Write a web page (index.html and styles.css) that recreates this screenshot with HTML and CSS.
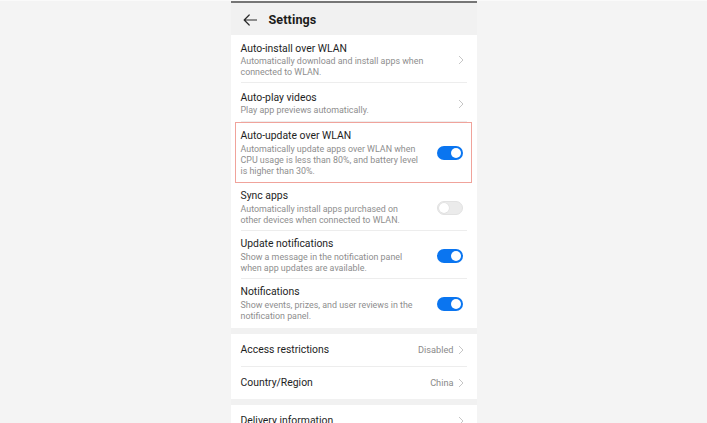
FILE: index.html
```html
<!DOCTYPE html>
<html lang="en">
<head>
<meta charset="utf-8">
<title>Settings</title>
<link rel="stylesheet" href="styles.css">
</head>
<body>
<div class="page">
  <div class="phone">
    <header class="header">
      <svg class="back" width="14" height="12" viewBox="0 0 14 12" aria-hidden="true">
        <path d="M13.5 6H1.2M6.2 1L1.2 6l5 5" fill="none" stroke="#2a2a2a" stroke-width="1.2" stroke-linecap="round" stroke-linejoin="round"/>
      </svg>
      <h1 class="title">Settings</h1>
    </header>

    <section class="card list">
      <div class="row row-first">
        <div class="text">
          <div class="name">Auto-install over WLAN</div>
          <div class="desc">Automatically download and install apps when<br>connected to WLAN.</div>
        </div>
        <svg class="chev" width="6" height="10" viewBox="0 0 6 10" aria-hidden="true"><path d="M1 1l4 4-4 4" fill="none" stroke="#c6c6c6" stroke-width="1"/></svg>
      </div>
      <div class="row row-second">
        <div class="text">
          <div class="name">Auto-play videos</div>
          <div class="desc">Play app previews automatically.</div>
        </div>
        <svg class="chev" width="6" height="10" viewBox="0 0 6 10" aria-hidden="true"><path d="M1 1l4 4-4 4" fill="none" stroke="#c6c6c6" stroke-width="1"/></svg>
      </div>
      <div class="row highlight">
        <div class="text">
          <div class="name">Auto-update over WLAN</div>
          <div class="desc">Automatically update apps over WLAN when<br>CPU usage is less than 80%, and battery level<br>is higher than 30%.</div>
        </div>
        <span class="switch on"><span class="knob"></span></span>
      </div>
      <div class="row">
        <div class="text">
          <div class="name">Sync apps</div>
          <div class="desc">Automatically install apps purchased on<br>other devices when connected to WLAN.</div>
        </div>
        <span class="switch off"><span class="knob"></span></span>
      </div>
      <div class="row">
        <div class="text">
          <div class="name">Update notifications</div>
          <div class="desc">Show a message in the notification panel<br>when app updates are available.</div>
        </div>
        <span class="switch on"><span class="knob"></span></span>
      </div>
      <div class="row row-last">
        <div class="text">
          <div class="name">Notifications</div>
          <div class="desc">Show events, prizes, and user reviews in the<br>notification panel.</div>
        </div>
        <span class="switch on"><span class="knob"></span></span>
      </div>
    </section>

    <section class="card list">
      <div class="row simple">
        <div class="name">Access restrictions</div>
        <div class="value">Disabled</div>
        <svg class="chev" width="6" height="10" viewBox="0 0 6 10" aria-hidden="true"><path d="M1 1l4 4-4 4" fill="none" stroke="#c6c6c6" stroke-width="1"/></svg>
      </div>
      <div class="row simple">
        <div class="name">Country/Region</div>
        <div class="value">China</div>
        <svg class="chev" width="6" height="10" viewBox="0 0 6 10" aria-hidden="true"><path d="M1 1l4 4-4 4" fill="none" stroke="#c6c6c6" stroke-width="1"/></svg>
      </div>
    </section>

    <section class="card list">
      <div class="row simple">
        <div class="name">Delivery information</div>
        <div class="value"></div>
        <svg class="chev" width="6" height="10" viewBox="0 0 6 10" aria-hidden="true"><path d="M1 1l4 4-4 4" fill="none" stroke="#c6c6c6" stroke-width="1"/></svg>
      </div>
    </section>
  </div>
</div>
</body>
</html>
```

FILE: styles.css
```css
* { box-sizing: border-box; }

html, body {
  margin: 0;
  padding: 0;
  background: #f4f4f4;
  overflow: hidden;
}

body {
  font-family: Roboto, "Liberation Sans", Arial, sans-serif;
  color: #1e1e1e;
}

.page {
  border-top: 1px solid #fafafa;
  height: 100vh;
  overflow: hidden;
  background: #f4f4f4;
}

.phone {
  width: 246px;
  margin: 0 auto;
  border-top: 2px solid #767676;
  background: #f1f1f1;
}

.header {
  height: 32px;
  display: flex;
  align-items: center;
  padding-left: 12px;
}

.back {
  display: block;
  margin-top: 1px;
}

.title {
  margin: 0 0 0 12px;
  font-size: 12.6px;
  font-weight: 700;
  color: #1c1c1c;
  letter-spacing: 0.1px;
}

.card {
  background: #fff;
  padding: 0 10px;
  margin-bottom: 6px;
}

.row {
  display: flex;
  align-items: center;
  padding: 6px 0 4px;
  border-bottom: 1px solid #ededed;
}

.row:last-child {
  border-bottom: none;
}

.row.row-first {
  padding-top: 7px;
  padding-bottom: 4px;
}

.row.row-first .desc {
  margin-top: 1px;
}

.row.row-second {
  padding-top: 8px;
  padding-bottom: 5px;
}

.row.row-second .desc {
  margin-top: 1px;
}

.row.row-last {
  padding-bottom: 6px;
}

.text {
  flex: 1;
  min-width: 0;
}

.name {
  font-size: 10.4px;
  line-height: 13px;
  color: #1e1e1e;
}

.desc {
  margin-top: 2px;
  font-size: 8.9px;
  line-height: 11px;
  color: #8e8e8e;
}

.row.highlight {
  margin: 0 -5px 0 -6px;
  padding: 6px 4px 5px 5px;
  border: 1px solid #f0a39b;
}

.chev {
  display: block;
  flex: none;
  margin-right: 3px;
}

.switch {
  position: relative;
  flex: none;
  width: 26px;
  height: 14px;
  border-radius: 7px;
  margin-right: 4px;
}

.switch.on {
  background: #0a75f0;
}

.switch.off {
  background: #ebebeb;
  border: 1px solid #e2e2e2;
}

.knob {
  position: absolute;
  top: 2px;
  width: 10px;
  height: 10px;
  border-radius: 50%;
  background: #fff;
}

.switch.on .knob {
  right: 2px;
}

.switch.off .knob {
  top: 1px;
  left: 1px;
  width: 10px;
  height: 10px;
  box-shadow: 0 0 0 0.5px #dcdcdc;
}

.row.simple {
  padding: 10px 0;
}

.simple .name {
  flex: 1;
  line-height: 12px;
}

.value {
  font-size: 9.2px;
  line-height: 12px;
  color: #8a8a8a;
  margin-right: 4px;
}
```
